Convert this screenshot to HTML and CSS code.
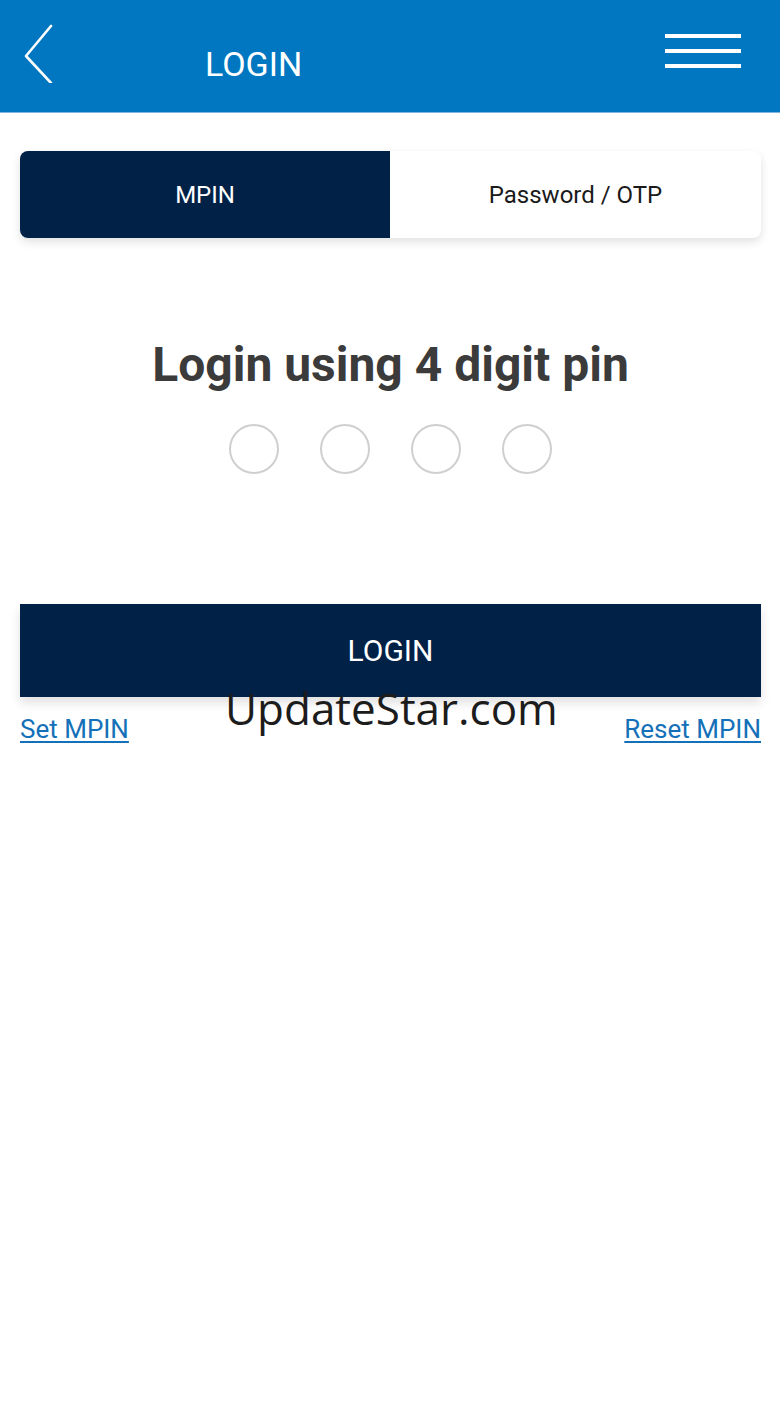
FILE: index.html
```html
<!DOCTYPE html>
<html>
<head>
<meta charset="utf-8">
<link rel="stylesheet" href="styles.css">
</head>
<body>
<header class="topbar">
  <svg class="back" width="34" height="60" viewBox="0 0 34 60"><polyline points="29,3 4,33 29,60" fill="none" stroke="#fff" stroke-width="2.6" stroke-linecap="round" stroke-linejoin="round"/></svg>
  <h1 class="title">LOGIN</h1>
  <div class="menu"><span></span><span></span><span></span></div>
</header>
<main class="content">
  <div class="tabs">
    <div class="tab active">MPIN</div>
    <div class="tab">Password / OTP</div>
  </div>
  <h2 class="heading">Login using 4 digit pin</h2>
  <div class="pins">
    <span class="pin"></span><span class="pin"></span><span class="pin"></span><span class="pin"></span>
  </div>
  <div class="login-wrap">
    <button class="login-btn">LOGIN</button>
    <div class="links">
      <a href="#">Set MPIN</a>
      <a href="#">Reset MPIN</a>
    </div>
    <div class="watermark">UpdateStar.com</div>
  </div>
</main>
</body>
</html>
```
FILE: styles.css
```css
* { box-sizing: border-box; }
html, body { margin: 0; padding: 0; background: #fff; }
body { font-family: Roboto, "Liberation Sans", sans-serif; width: 780px; height: 1409px; }
.topbar {
  height: 113px;
  background: #0077c0;
  border-bottom: 1px solid #7fb5dd;
  display: flex;
  align-items: center;
  position: relative;
  padding: 0 39px 0 22px;
}
.back { margin-top: -6px; }
.title {
  margin: 0 0 0 149px;
  color: #fff;
  font-weight: 400;
  font-size: 34px;
  padding-top: 16px;
}
.menu { margin-left: auto; display: flex; flex-direction: column; gap: 11px; margin-top: -10px; }
.menu span { display: block; width: 76px; height: 4px; background: #fff; }
.content { padding: 38px 19px 0 20px; }
.tabs {
  display: flex;
  height: 87px;
  border-radius: 8px;
  box-shadow: 0 4px 10px rgba(0,0,0,0.12);
  overflow: hidden;
  background: #fff;
}
.tab {
  flex: 1;
  display: flex;
  align-items: center;
  justify-content: center;
  font-size: 24px;
  color: #1a1a1a;
}
.tab.active { background: #012147; color: #fff; flex: 0 0 370px; }
.heading {
  margin: 102px 0 0;
  text-align: center;
  font-size: 48px;
  font-weight: 700;
  color: #3b3b3b;
  line-height: 50px;
}
.pins { display: flex; justify-content: center; gap: 41px; margin-top: 34px; }
.pin { width: 50px; height: 50px; border-radius: 50%; border: 2px solid #cfcfcf; }
.login-wrap { position: relative; margin-top: 130px; }
.login-btn {
  display: block;
  width: 741px;
  height: 93px;
  background: #012147;
  color: #fff;
  border: none;
  font-family: Roboto, "Liberation Sans", sans-serif;
  font-size: 30px;
  box-shadow: 0 6px 10px rgba(0,0,0,0.12);
}
.links { display: flex; justify-content: space-between; margin-top: 17px; }
.links a { color: #1470b8; font-size: 26px; text-decoration: underline; text-underline-offset: 3px; }
.watermark {
  position: absolute;
  left: 205px;
  top: 78px;
  font-family: "Open Sans", "DejaVu Sans", sans-serif;
  font-size: 44px;
  color: #1c1c1c;
  line-height: 52px;
}
```
